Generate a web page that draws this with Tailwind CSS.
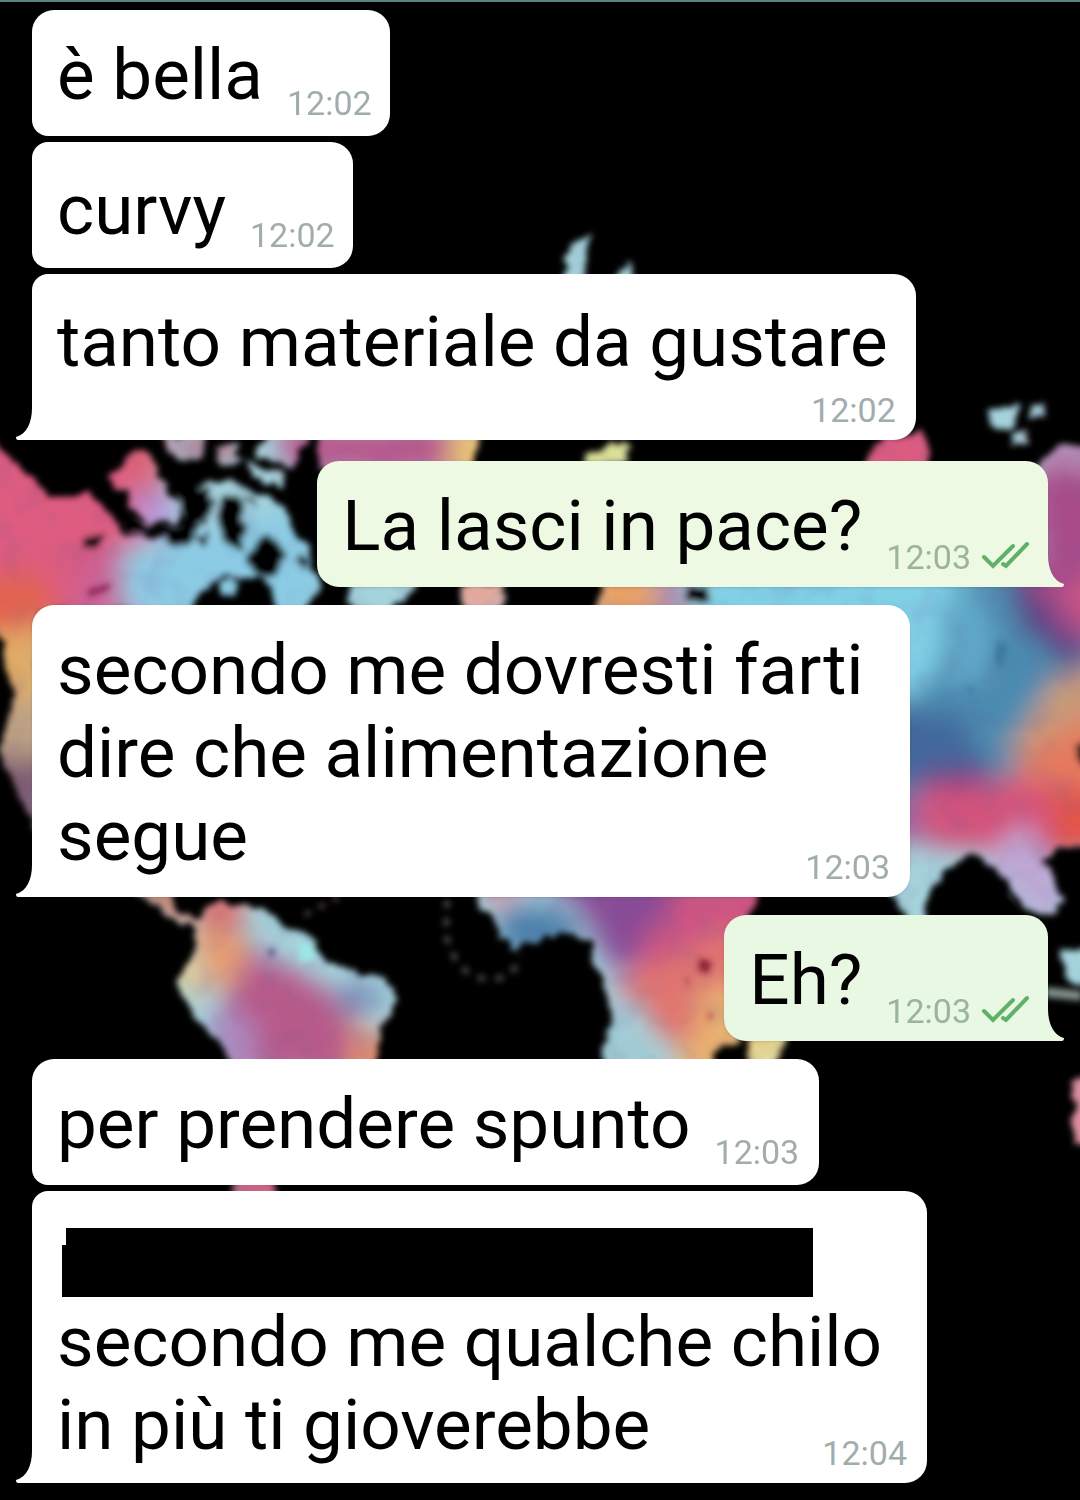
<!DOCTYPE html>
<html lang="it">
  <head>
    <meta charset="utf-8" />
    <meta name="viewport" content="width=device-width, initial-scale=1" />
    <title>Chat</title>
    <script src="https://cdn.jsdelivr.net/npm/@tailwindcss/browser@4"></script>
  </head>
  <body class="bg-black">
    <div class="relative min-h-screen overflow-hidden border-t-2 border-[#5a8280] bg-black font-[Roboto,sans-serif]">
      <!-- wallpaper: painted world map -->
      <svg class="absolute inset-x-0 -top-0.5 h-full w-full" viewBox="0 0 1080 1500" preserveAspectRatio="xMidYMin slice" aria-hidden="true">
        <defs>
          <filter id="edge" x="-20" y="0" width="1120" height="1500" filterUnits="userSpaceOnUse">
            <feTurbulence type="fractalNoise" baseFrequency="0.07" numOctaves="2" seed="4" />
            <feDisplacementMap in="SourceGraphic" scale="14" xChannelSelector="R" yChannelSelector="G" />
            <feGaussianBlur stdDeviation="3" />
          </filter>
          <filter id="paint" x="-50" y="-50" width="1180" height="1600" filterUnits="userSpaceOnUse">
            <feTurbulence type="fractalNoise" baseFrequency="0.03" numOctaves="2" seed="9" />
            <feDisplacementMap in="SourceGraphic" scale="30" xChannelSelector="R" yChannelSelector="G" />
            <feGaussianBlur stdDeviation="13" />
          </filter>
          <filter id="mottle" x="0" y="0" width="1080" height="1500" filterUnits="userSpaceOnUse">
            <feTurbulence type="fractalNoise" baseFrequency="0.035" numOctaves="2" seed="7" />
            <feColorMatrix values="0 0 0 0 0.15  0 0 0 0 0.1  0 0 0 0 0.3  2.4 0 0 0 -1.1" />
          </filter>
          <filter id="soft" x="-50" y="-50" width="1180" height="1600" filterUnits="userSpaceOnUse">
            <feGaussianBlur stdDeviation="3" />
          </filter>
          <mask id="land" maskUnits="userSpaceOnUse" x="0" y="0" width="1080" height="1500">
            <g filter="url(#edge)">
              <g fill="#fff">
                <path d="M-30 430 L0 446 L22 472 L50 496 L85 494 L108 510 L122 532 L150 536 L178 542 L205 522 L213 500 L232 484 L262 492 L284 506 L292 528 L307 545 L312 572 L320 586 L304 612 L278 612 L270 584 L256 576 L240 582 L226 574 L205 590 L185 612 L-30 612 Z" />
                <path d="M110 478 L125 457 L145 450 L158 470 L170 494 L184 508 L178 522 L150 525 L132 512 L127 490 L113 486 Z" />
                <path d="M162 434 L206 432 L202 460 L176 458 Z M214 448 L236 444 L242 464 L222 466 Z M270 432 L312 432 L294 466 L252 456 Z" />
                <path d="M244 460 L285 474 L282 488 L250 478 Z M200 486 L228 478 L238 488 L222 500 L202 500 Z" />
                <path d="M218 585 L234 576 L238 596 L222 598 Z M262 552 L275 556 L272 566 L260 564 Z" />
                <path d="M-30 575 L40 600 L40 840 L22 800 L6 770 L1 750 L9 715 L14 695 L8 670 L-2 630 L-30 620 Z" />
                <path d="M318 430 H482 L472 470 H318 Z M584 456 L600 452 L612 442 L632 444 L626 458 L606 466 L584 466 Z" />
                <path d="M884 436 L925 432 L932 470 L860 470 Z M1045 458 L1060 446 L1110 446 V620 H1030 V470 Z" />
                <path d="M350 580 H420 L390 612 H350 Z M462 582 H502 V612 H464 Z M604 575 H1110 V845 L1062 848 L1042 860 L1054 882 L1062 900 L1052 918 L1032 912 L1010 886 L990 862 L968 853 L945 868 L928 895 L922 932 L912 932 L890 890 L890 640 H590 Z" />
                <path d="M560 284 L566 262 L574 242 L590 234 L588 256 L583 284 Z M610 284 L630 260 L636 284 Z" />
                <path d="M986 410 L1020 406 L1012 430 L996 430 Z M1028 408 L1046 404 L1044 416 L1030 416 Z M1012 434 L1030 430 L1028 446 L1014 446 Z" />
                <path d="M128 885 L172 885 L176 912 L200 918 L206 908 L225 902 L266 911 L285 928 L312 936 L326 966 L352 970 L382 978 L397 996 L382 1026 L374 1070 L236 1070 L216 1040 L190 1008 L178 986 L182 968 L196 952 L194 926 L172 924 L158 908 Z" />
                <path d="M468 880 H765 L740 940 V1040 L712 1056 L720 1070 H606 L602 1046 L613 1020 L608 992 L596 966 L592 942 L565 932 L528 942 L516 952 L496 926 Z" />
                <path d="M752 1030 H790 L776 1066 H746 Z M1058 954 L1100 942 V990 L1066 980 Z" />
                <path d="M1100 1070 L1072 1086 L1074 1142 L1100 1150 Z M234 1178 H276 V1200 H234 Z" />
              </g>
              <g fill="#000">
                <path d="M222 498 L240 496 L246 528 L240 550 L222 542 L218 516 Z M250 546 L270 534 L286 556 L278 576 L256 576 L246 562 Z" />
                <path d="M182 486 L208 490 L210 518 L194 524 L180 508 Z M160 530 L194 528 L190 544 L168 546 Z M82 536 L102 534 L100 548 L84 550 Z" />
                <path d="M244 498 L256 496 L254 510 Z M192 534 L208 530 L204 548 Z M298 554 L308 560 L303 574 Z M130 520 L150 524 L146 534 L128 530 Z" />
                <path d="M686 586 H710 V602 H686 Z M1004 896 L1010 896 L1012 930 L1004 930 Z M1072 744 L1110 736 V768 L1082 766 Z" />
              </g>
            </g>
          </mask>
        </defs>
        <g mask="url(#land)">
          <rect width="1080" height="1500" fill="#a5d3dc" />
          <g filter="url(#paint)">
            <rect x="-40" y="420" width="190" height="210" fill="#dd5c80" />
            <path d="M-40 575 L30 565 L70 635 H-40 Z" fill="#e2634f" />
            <path d="M120 430 H165 V500 H120 Z" fill="#dc6277" />
            <path d="M135 490 L175 495 L180 530 L130 530 Z" fill="#b795d8" />
            <path d="M130 545 L330 500 V620 H110 Z" fill="#8bcbe4" />
            <path d="M80 560 L130 540 L120 620 H70 Z" fill="#c86297" />
            <path d="M180 430 H240 V462 H180 Z" fill="#b07a90" />
            <path d="M270 425 H450 V475 H290 Z" fill="#b8568b" />
            <rect x="445" y="425" width="60" height="50" fill="#ecc173" />
            <rect x="570" y="425" width="80" height="50" fill="#dce093" />
            <rect x="850" y="415" width="100" height="70" fill="#dc5a80" />
            <path d="M-20 635 L50 620 V700 H-20 Z" fill="#dfab68" />
            <rect x="-20" y="700" width="70" height="55" fill="#bda083" />
            <rect x="-20" y="755" width="70" height="90" fill="#7b5b72" />
            <rect x="445" y="560" width="70" height="60" fill="#e5a79c" />
            <rect x="590" y="560" width="70" height="70" fill="#e7a066" />
            <rect x="660" y="570" width="30" height="60" fill="#a58cb0" />
            <rect x="700" y="560" width="260" height="140" fill="#80d0e6" />
            <path d="M955 570 H1010 L1090 640 V710 L1000 790 H880 V700 H910 L940 670 Z" fill="#4c8bb0" />
            <path d="M955 580 H985 L990 680 L955 690 Z" fill="#62aacb" />
            <path d="M870 700 L960 710 L980 770 L940 790 L870 780 Z" fill="#43699d" />
            <path d="M1000 560 L1025 630 L1080 675 L1080 630 L1040 560 Z" fill="#5a4283" />
            <path d="M1030 425 H1120 V670 L1070 640 L1035 590 Z" fill="#a94c89" />
            <path d="M1030 430 H1120 V470 H1030 Z" fill="#b48cb4" />
            <path d="M1060 590 L1110 560 V670 Z" fill="#cf5684" />
            <path d="M1050 690 L1110 655 V740 L1000 760 Z" fill="#c89a78" />
            <path d="M1030 740 L1110 715 V800 L1010 800 Z" fill="#e57a5d" />
            <path d="M925 768 L1000 765 L990 788 L915 792 Z" fill="#634388" />
            <path d="M880 798 L1010 780 L1110 790 V860 L900 842 Z" fill="#d3527b" />
            <path d="M1055 790 H1110 V850 H1055 Z" fill="#e25548" />
            <path d="M870 790 H915 V845 H870 Z" fill="#95669f" />
            <path d="M985 870 L1025 820 L1070 890 L1050 930 Z" fill="#bda9d6" />
            <path d="M120 875 H180 L195 925 H165 Z" fill="#cc806a" />
            <path d="M196 890 H245 L240 935 L200 940 Z" fill="#e1656b" />
            <path d="M198 930 L236 926 L250 980 L205 985 Z" fill="#e79a70" />
            <path d="M165 950 L200 950 L200 990 L175 1000 Z" fill="#e8cc92" />
            <path d="M250 935 L270 960 L340 1000 L365 1020 L340 1080 L260 1080 L225 1000 Z" fill="#b75a8a" />
            <path d="M205 1005 L250 1020 L265 1080 L220 1080 Z" fill="#ab86bd" />
            <path d="M335 985 L375 985 L380 1012 L340 1015 Z" fill="#7789b4" />
            <path d="M350 1035 L405 1025 V1090 L340 1090 Z" fill="#e08c70" />
            <path d="M465 865 L530 875 L500 915 Z" fill="#d98ca2" />
            <path d="M500 912 L560 905 L590 938 L500 955 Z" fill="#4a7da8" />
            <path d="M530 870 H700 L670 930 L615 970 L590 915 Z" fill="#884b96" />
            <path d="M690 870 H800 V960 L650 1010 L615 990 L640 950 Z" fill="#cd5482" />
            <path d="M625 975 L740 930 V1020 L700 1080 L640 1010 Z" fill="#e0746f" />
            <path d="M700 985 L800 960 V1090 H680 Z" fill="#e8b070" />
            <path d="M590 1015 L625 1005 L670 1080 H580 Z" fill="#a0cbd4" />
            <rect x="745" y="1035" width="60" height="60" fill="#e3dc98" />
            <rect x="1050" y="1050" width="70" height="120" fill="#e08fa0" />
            <rect x="215" y="1155" width="80" height="65" fill="#cb6481" />
          </g>
          <rect width="1080" height="1500" filter="url(#mottle)" opacity="0.15" />
          <g filter="url(#soft)">
            <path d="M997 640 L1008 645 L1003 668 L994 662 Z M966 688 L974 686 L972 698 Z" fill="#346a91" opacity="0.6" />
            <path d="M700 958 L712 962 L708 974 L698 970 Z" fill="#8b2039" />
            <path d="M684 978 L690 976 L688 990 Z M706 1012 L714 1014 L710 1022 Z" fill="#b5505a" />
            <path d="M268 948 L276 950 L270 960 Z" fill="#5a4c80" />
            <path d="M298 942 L316 945 L314 960 L300 962 Z" fill="#9ee5e6" />
            <path d="M88 590 L112 583 L108 590 L88 597 Z" fill="#8a2451" />
          </g>
        </g>
        <path d="M447 900 L446 935 Q456 975 485 979 Q514 982 520 955" fill="none" stroke="#8c9590" stroke-width="6" stroke-dasharray="8 10" opacity="0.5" filter="url(#soft)" />
        <path d="M1045 992 L1082 996" stroke="#82918f" stroke-width="10" filter="url(#soft)" />
        <path d="M305 915 L340 896" stroke="#8c6a70" stroke-width="5" stroke-dasharray="6 10" opacity="0.7" filter="url(#soft)" />
      </svg>

      <main class="relative flex flex-col items-start px-8 pt-2 pb-4 text-[71px] leading-[83px] text-black">
        <div class="flex items-end gap-6 rounded-[22px] rounded-bl-2xl bg-white pt-[23px] pr-[18px] pb-[17px] pl-[25px]">
          <p class="pb-[3px]">è bella</p>
          <time class="text-[34px] leading-8 text-[#a1adad]">12:02</time>
        </div>

        <div class="mt-1.5 flex items-end gap-6 rounded-[22px] rounded-l-2xl bg-white pt-[26px] pr-[18px] pb-[17px] pl-[25px]">
          <p>curvy</p>
          <time class="text-[34px] leading-8 text-[#a1adad]">12:02</time>
        </div>

        <div class="relative mt-1.5 flex flex-col rounded-[22px] rounded-tl-2xl rounded-bl-none bg-white pt-[26px] pr-5 pb-3 pl-[25px]">
          <svg class="absolute bottom-0 -left-4 h-8 w-4 fill-white" viewBox="0 0 16 32" aria-hidden="true"><path d="M16 0 C16 14 11 26 0 29 Q0 32 2 32 H16 Z" /></svg>
          <p class="pr-2">tanto materiale da gustare</p>
          <time class="mt-[9px] self-end text-[34px] leading-9 text-[#a1adad]">12:02</time>
        </div>

        <div class="relative mt-[21px] flex items-end gap-6 self-end rounded-[22px] rounded-br-none bg-[#eef9e3] pt-[23px] pr-[19px] pb-[14px] pl-[25px] shadow-sm">
          <svg class="absolute -right-4 bottom-0 h-8 w-4 fill-[#eef9e3]" viewBox="0 0 16 32" aria-hidden="true"><path d="M0 0 C0 14 5 26 16 29 Q16 32 14 32 H0 Z" /></svg>
          <p class="pb-1.5">La lasci in pace?</p>
          <div class="flex items-end gap-2.5">
            <time class="text-[34px] leading-8 text-[#9bb49d]">12:03</time>
            <svg class="h-8 w-12 fill-none stroke-[#61b067] stroke-4" viewBox="0 0 48 32" stroke-linecap="round" aria-hidden="true"><path d="M3 16 L12 25 L32 5 M22 23 L25 25 L46 3" /></svg>
          </div>
        </div>

        <div class="relative mt-[18px] max-w-[878px] rounded-[22px] rounded-bl-none bg-white pt-[23px] pr-5 pb-3 pl-[25px] shadow-sm">
          <svg class="absolute bottom-0 -left-4 h-8 w-4 fill-white" viewBox="0 0 16 32" aria-hidden="true"><path d="M16 0 C16 14 11 26 0 29 Q0 32 2 32 H16 Z" /></svg>
          <p>secondo me dovresti farti dire che alimentazione segue<time class="float-right mt-[55px] text-[34px] leading-9 text-[#a1adad]">12:03</time></p>
        </div>

        <div class="relative mt-[18px] flex items-end gap-6 self-end rounded-[22px] rounded-br-none bg-[#e8f8e3] pt-[23px] pr-[19px] pb-[14px] pl-[25px] shadow-sm">
          <svg class="absolute -right-4 bottom-0 h-8 w-4 fill-[#e8f8e3]" viewBox="0 0 16 32" aria-hidden="true"><path d="M0 0 C0 14 5 26 16 29 Q16 32 14 32 H0 Z" /></svg>
          <p class="pb-1.5">Eh?</p>
          <div class="flex items-end gap-2.5">
            <time class="text-[34px] leading-8 text-[#9bb49d]">12:03</time>
            <svg class="h-8 w-12 fill-none stroke-[#61b067] stroke-4" viewBox="0 0 48 32" stroke-linecap="round" aria-hidden="true"><path d="M3 16 L12 25 L32 5 M22 23 L25 25 L46 3" /></svg>
          </div>
        </div>

        <div class="mt-[18px] flex items-end gap-6 rounded-[22px] rounded-bl-2xl bg-white pt-[23px] pr-5 pb-[17px] pl-[25px]">
          <p class="pb-[3px]">per prendere spunto</p>
          <time class="text-[34px] leading-8 text-[#a1adad]">12:03</time>
        </div>

        <div class="relative mt-1.5 max-w-[895px] rounded-[22px] rounded-tl-2xl rounded-bl-none bg-white pt-[26px] pr-5 pb-3 pl-[25px]">
          <svg class="absolute bottom-0 -left-4 h-8 w-4 fill-white" viewBox="0 0 16 32" aria-hidden="true"><path d="M16 0 C16 14 11 26 0 29 Q0 32 2 32 H16 Z" /></svg>
          <!-- censored line -->
          <div class="pt-[11px] pr-[94px] pb-[3px] pl-[9px]">
            <div class="relative h-[69px] bg-black before:absolute before:top-[17px] before:bottom-0 before:-left-1 before:w-1 before:bg-black"></div>
          </div>
          <p>secondo me qualche chilo in più ti gioverebbe<time class="float-right mt-[52px] text-[34px] leading-9 text-[#a1adad]">12:04</time></p>
        </div>
      </main>
    </div>
  </body>
</html>
